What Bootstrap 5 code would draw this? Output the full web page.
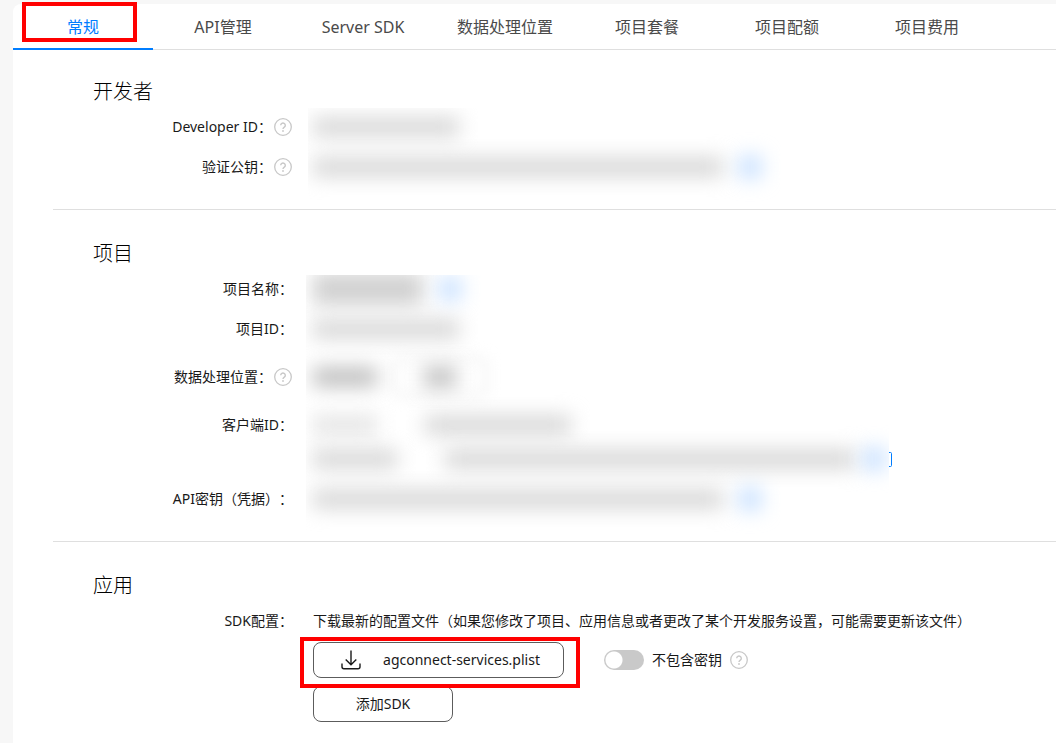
<!DOCTYPE html>
<html lang="zh-CN">
<head>
<meta charset="utf-8">
<meta name="viewport" content="width=device-width, initial-scale=1">
<title>项目设置</title>
<link href="https://cdn.jsdelivr.net/npm/bootstrap@5.3.0/dist/css/bootstrap.min.css" rel="stylesheet">
<style>
  body {
    background: #f7f7f7;
    color: #191919;
    font: 14px/20px "Noto Sans", "Noto Sans CJK SC", sans-serif;
    text-spacing-trim: space-all;
    overflow-x: hidden;
  }
  .settings { margin: 4px 0 0 13px; min-height: calc(100vh - 4px); border-top-left-radius: 8px; }

  /* Tabs */
  .tab-bar { border-bottom: 1px solid #dfdfdf; }
  .tab-bar .nav-link {
    min-width: 140px; height: 46px; padding: 11px 24px 9px; margin-bottom: -1px;
    font-size: 16px; line-height: 24px; color: #4a4a4a; text-align: center; white-space: nowrap;
    border-bottom: 2px solid transparent; border-radius: 0;
  }
  .tab-bar .nav-link.active { color: #007dff; border-bottom-color: #007dff; }

  /* Sections */
  .block { margin-left: 40px; padding: 27px 0 22px 40px; border-bottom: 1px solid #dfdfdf; }
  .block:last-child { border-bottom: 0; }
  .block h2 { font-size: 20px; line-height: 30px; font-weight: 300; color: #000; margin: 0; }
  .block h2.lower { margin-top: 2px; }
  .field { min-height: 40px; }
  .field.tall { min-height: 56px; }
  .field-name { width: 200px; flex: none; text-align: right; white-space: nowrap; line-height: 40px; }
  .tall .field-name { line-height: 56px; }
  .hint { width: 18px; height: 18px; flex: none; padding: 0; border: 0; background: none; display: inline-flex; color: #c8c8c8; }
  .field-name .hint { vertical-align: middle; margin: -2px 1px 0 2px; }
  .field-value { margin-left: 20px; min-width: 0; }
  .note { line-height: 40px; }

  /* Hidden values */
  .veil { margin-left: 13px; padding-left: 7px; display: flex; align-items: center; clip-path: inset(-20px -20px -20px 0); }
  .veil.inset-more { clip-path: inset(-20px -20px -20px 2px); }
  .veil.first-cut { clip-path: inset(1px -20px -20px 2px); }
  .veil.top-cut { clip-path: inset(6px -20px -20px 0); }
  .veil.right-cut { clip-path: inset(-20px 0 -20px 0); }
  .smear { flex: none; height: 18px; background: #d4d4d4; filter: blur(10px); }
  .smear.light { background: #e2e2e2; }
  .smear.dark { background: #b8b8b8; }
  .smear.thick { height: 32px; background: #d0d0d0; }
  .smear.blue { background: #c4deff; width: 22px; height: 22px; }
  .smear-frame { width: 94px; height: 40px; position: relative; }
  .smear-frame::before { content: ""; position: absolute; inset: 0; border: 3px solid #eaeaea; border-radius: 8px; filter: blur(7px); }
  .w-sm { width: 64px; } .w-name { width: 84px; } .w-md { width: 110px; } .w-lg { width: 146px; } .w-xl { width: 410px; } .w-fit { width: 32px; }
  .second-line { height: 34px; }
  .second-line .veil { height: 28px; }
  .copy-edge { margin: 7px 0 0; }

  /* Controls */
  .btn-line {
    height: 36px; border: 1px solid #5c5c5c; border-radius: 8px; background: #fff; color: #191919;
    font-size: 14px; line-height: 20px; padding: 0 20px;
  }
  .btn-download { width: 251px; gap: 22px; padding: 0 20px 0 24px; }
  .btn-add { width: 140px; }
  .form-switch .switch {
    width: 40px; height: 20px; margin: 0; border: 0; background-color: #c9c9c9;
    background-image: radial-gradient(circle at 10px 10px, #fff 8px, transparent 9px);
  }
  .key-option { margin-left: 32px; gap: 8px; min-height: 20px; }
  .tools { gap: 8px; margin: 1px 0 8px; }

  /* Step highlights */
  .highlight { position: absolute; border: 4px solid #f00; pointer-events: none; z-index: 2; }
  .highlight.on-tab { left: 9px; right: 16px; top: -2px; bottom: 7px; }
  .highlight.on-download { inset: -5px -16px -10px -13px; }
</style>
</head>
<body>
<svg class="d-none" xmlns="http://www.w3.org/2000/svg">
  <symbol id="question" viewBox="0 0 18 18">
    <circle cx="9" cy="9" r="8.3" fill="none" stroke="currentColor" stroke-width="1.3"/>
    <path d="M6.7 7.2a2.3 2.2 0 1 1 3.6 1.9c-.9.6-1.3 1-1.3 1.9" fill="none" stroke="currentColor" stroke-width="1.4"/>
    <circle cx="9" cy="13" r=".9" fill="currentColor"/>
  </symbol>
</svg>

<main class="settings bg-white">
  <ul class="nav flex-nowrap tab-bar">
    <li class="nav-item position-relative"><a class="nav-link active" aria-current="page" href="#general">常规</a><span class="highlight on-tab"></span></li>
    <li class="nav-item"><a class="nav-link" href="#api">API管理</a></li>
    <li class="nav-item"><a class="nav-link" href="#server">Server SDK</a></li>
    <li class="nav-item"><a class="nav-link" href="#location">数据处理位置</a></li>
    <li class="nav-item"><a class="nav-link" href="#plan">项目套餐</a></li>
    <li class="nav-item"><a class="nav-link" href="#quota">项目配额</a></li>
    <li class="nav-item"><a class="nav-link" href="#cost">项目费用</a></li>
  </ul>

  <section class="block">
    <h2>开发者</h2>
    <div class="field d-flex">
      <div class="field-name">Developer ID：<button class="hint" type="button" aria-label="说明"><svg width="18" height="18"><use href="#question"/></svg></button></div>
      <div class="veil first-cut"><span class="smear w-lg"></span></div>
    </div>
    <div class="field d-flex">
      <div class="field-name">验证公钥：<button class="hint" type="button" aria-label="说明"><svg width="18" height="18"><use href="#question"/></svg></button></div>
      <div class="veil inset-more gap-3"><span class="smear w-xl"></span><span class="smear blue"></span></div>
    </div>
  </section>

  <section class="block">
    <h2 class="lower">项目</h2>
    <div class="field d-flex">
      <div class="field-name">项目名称：</div>
      <div class="veil top-cut gap-3"><span class="smear w-md thick"></span><span class="smear blue"></span></div>
    </div>
    <div class="field d-flex">
      <div class="field-name">项目ID：</div>
      <div class="veil"><span class="smear w-lg"></span></div>
    </div>
    <div class="field tall d-flex">
      <div class="field-name">数据处理位置：<button class="hint" type="button" aria-label="说明"><svg width="18" height="18"><use href="#question"/></svg></button></div>
      <div class="veil gap-3"><span class="smear w-sm dark"></span><div class="smear-frame d-flex align-items-center justify-content-center"><span class="smear w-fit dark"></span></div></div>
    </div>
    <div class="field d-flex">
      <div class="field-name">客户端ID：</div>
      <div class="veil gap-5"><span class="smear w-sm light"></span><span class="smear w-lg"></span></div>
    </div>
    <div class="second-line d-flex">
      <div class="field-name"></div>
      <div class="veil right-cut"><span class="smear w-name"></span><span class="smear w-xl ms-5"></span><span class="smear blue ms-2 me-1"></span></div>
      <svg class="copy-edge" width="4" height="16" viewBox="0 0 4 16" fill="none" stroke="#007dff" stroke-width="1"><path d="M0 .5h1.5q1 0 1 1v12q0 1-1 1H0"/></svg>
    </div>
    <div class="field d-flex">
      <div class="field-name">API密钥（凭据）：</div>
      <div class="veil gap-3"><span class="smear w-xl"></span><span class="smear blue"></span></div>
    </div>
  </section>

  <section class="block">
    <h2 class="lower">应用</h2>
    <div class="field d-flex">
      <div class="field-name">SDK配置：</div>
      <div class="field-value">
        <div class="note">下载最新的配置文件（如果您修改了项目、应用信息或者更改了某个开发服务设置，可能需要更新该文件）</div>
        <div class="tools d-flex align-items-center">
          <div class="position-relative">
            <button class="btn btn-line btn-download d-flex align-items-center justify-content-center" type="button">
              <svg width="20" height="20" viewBox="0 0 20 20" fill="none" stroke="#191919" stroke-width="1.4"><path d="M10 .5v14M4.7 9.6l5.3 5.2 5.3-5.2M1 13.5v3.2a2 2 0 0 0 2 2h14a2 2 0 0 0 2-2v-3.2"/></svg>
              agconnect-services.plist
            </button>
            <span class="highlight on-download"></span>
          </div>
          <div class="form-check form-switch key-option d-flex align-items-center p-0 mb-0">
            <input class="form-check-input switch" type="checkbox" role="switch" id="noKey">
            <label for="noKey">不包含密钥</label>
          </div>
          <button class="hint" type="button" aria-label="说明"><svg width="18" height="18"><use href="#question"/></svg></button>
        </div>
        <button class="btn btn-line btn-add" type="button">添加SDK</button>
      </div>
    </div>
  </section>
</main>
<script src="https://cdn.jsdelivr.net/npm/bootstrap@5.3.0/dist/js/bootstrap.bundle.min.js"></script>
</body>
</html>
